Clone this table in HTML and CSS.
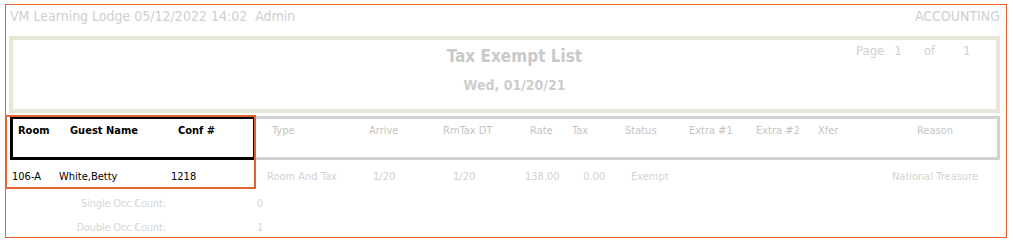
FILE: index.html
```html
<!DOCTYPE html>
<html>
<head>
<meta charset="utf-8">
<link rel="stylesheet" href="styles.css">
</head>
<body>
<div class="frame">
  <div class="topbar">
    <span class="site">VM Learning Lodge 05/12/2022 14:02&nbsp; Admin</span>
    <span class="dept">ACCOUNTING</span>
  </div>
  <div class="titlebox">
    <div class="titles">
      <div class="title">Tax Exempt List</div>
      <div class="subtitle">Wed, 01/20/21</div>
    </div>
    <div class="page"><span>Page</span><span>1</span><span class="of">of</span><span>1</span></div>
  </div>
  <div class="hd">
    <span class="key">Room</span>
    <span class="key">Guest Name</span>
    <span class="key">Conf #</span>
    <span>Type</span>
    <span>Arrive</span>
    <span>RmTax DT</span>
    <span>Rate</span>
    <span>Tax</span>
    <span>Status</span>
    <span>Extra #1</span>
    <span>Extra #2</span>
    <span>Xfer</span>
    <span class="reason">Reason</span>
    <div class="keybox"></div>
  </div>
  <div class="row">
    <span class="key">106-A</span>
    <span class="key">White,Betty</span>
    <span class="key">1218</span>
    <span>Room And Tax</span>
    <span>1/20</span>
    <span>1/20</span>
    <span>138.00</span>
    <span>0.00</span>
    <span>Exempt</span>
    <span class="reason">National Treasure</span>
  </div>
  <div class="count"><span class="lbl">Single Occ Count:</span><span>0</span></div>
  <div class="count"><span class="lbl">Double Occ Count:</span><span>1</span></div>
  <div class="highlight"></div>
</div>
</body>
</html>
```
FILE: styles.css
```css
html, body {
  margin: 0;
  padding: 0;
  background: #ffffff;
}
body {
  font-family: "DejaVu Sans Condensed", "DejaVu Sans", sans-serif;
  color: #c9c9c9;
}
.frame {
  position: relative;
  margin: 4px 0 0 5px;
  width: 1000px;
  height: 232px;
  border: 1px solid #e0622c;
}
.topbar {
  display: flex;
  justify-content: space-between;
  height: 31px;
  padding: 2px 6px 0 4px;
  box-sizing: border-box;
  font-size: 14px;
  line-height: 18px;
  color: #cfcfcf;
}
.titlebox {
  display: flex;
  margin-left: 3px;
  width: 991px;
  height: 77px;
  box-sizing: border-box;
  border: 4px solid #e8e6d6;
}
.titles {
  flex: 1;
  display: flex;
  flex-direction: column;
  align-items: center;
  padding-left: 160px;
}
.title {
  font-weight: bold;
  font-size: 17px;
  line-height: 22px;
  margin-top: 5px;
  color: #c9c9c9;
}
.subtitle {
  font-weight: bold;
  font-size: 14px;
  line-height: 18px;
  margin-top: 9px;
  color: #cdcdcd;
}
.page {
  display: flex;
  width: 140px;
  font-size: 13px;
  line-height: 16px;
  padding-top: 3px;
  color: #cfcfcf;
}
.page span { margin-right: 10px; }
.page .of { margin-left: 12px; margin-right: 28px; }
.hd {
  position: relative;
  display: grid;
  grid-template-columns: 52px 108px 94px 97px 74px 87px 42px 53px 64px 67px 62px 52px 130px;
  margin: 3px 0 0 4px;
  width: 990px;
  height: 44px;
  box-sizing: border-box;
  border: 3px solid #d2d2d2;
  padding: 5px 0 0 5px;
  font-size: 11px;
  line-height: 14px;
  color: #c4c4c4;
}
.hd .key {
  color: #000000;
  font-weight: bold;
}
.hd .reason { text-align: center; }
.keybox {
  position: absolute;
  left: -3px;
  top: -3px;
  width: 246px;
  height: 44px;
  box-sizing: border-box;
  border: 3px solid #000000;
}
.row {
  display: grid;
  grid-template-columns: 47px 112px 96px 106px 80px 72px 58px 48px 257px 94px;
  padding: 10px 0 0 6px;
  height: 31px;
  box-sizing: border-box;
  font-size: 11px;
  line-height: 14px;
  color: #d2d2d2;
}
.row .key { color: #000000; }
.row .reason { text-align: center; }
.count {
  display: flex;
  height: 24px;
  align-items: center;
  font-size: 10.6px;
  color: #d4d4d4;
}
.count .lbl {
  width: 160px;
  text-align: right;
  margin-right: 91px;
}
.highlight {
  position: absolute;
  left: -1px;
  top: 110px;
  width: 251px;
  height: 74px;
  box-sizing: border-box;
  border: 2px solid #e0622c;
}
```
